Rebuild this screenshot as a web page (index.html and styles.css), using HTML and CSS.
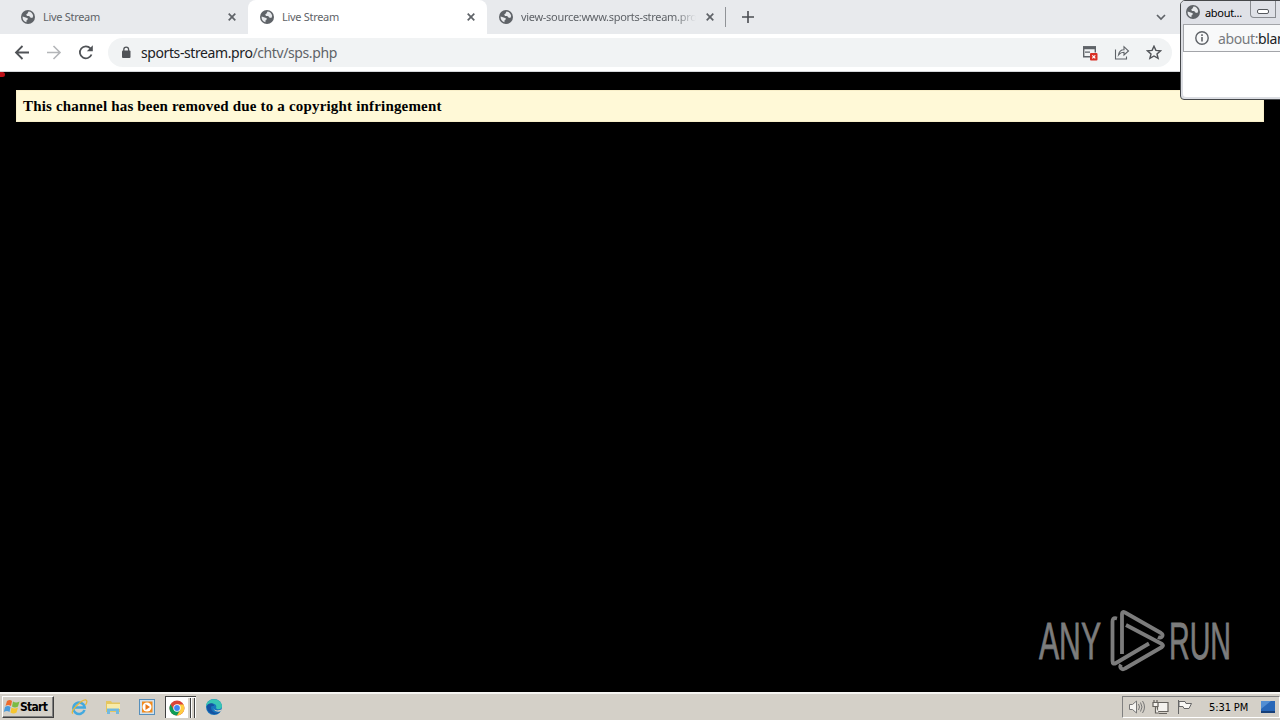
FILE: index.html
```
<!DOCTYPE html>
<html>
	<head>
		<meta charset="utf-8">
		<title>Live Stream</title>
		<link rel="stylesheet" href="styles.css">
	</head>
	<body>
		<svg class="defs">
			<symbol id="globe" viewBox="0 0 14 14">
				<circle cx="7" cy="7" r="7" fill="#5f6368"/>
				<path d="M1.6 6.4L4.6 7.5 6.8 8.2 6.4 10 5.4 10.6 5.5 12.3C2.8 11.6 1.3 9 1.6 6.4zM7.5 1.6L6.5 3.6 5.2 4.5 6 6 8.2 5.9 9.3 7.6 11.3 7.9 12.2 6.1C11.8 3.3 9.8 1.7 7.5 1.6z" fill="#e8eaed"/>
			</symbol>
			<symbol id="close" viewBox="0 0 8 8">
				<path d="M.7.7l6.6 6.6M7.3.7L.7 7.3" stroke="#5f6368" stroke-width="1.7"/>
			</symbol>
		</svg>
		<div id="screen">
			<div id="tabs">
				<div class="tab first">
					<svg class="globe"><use href="#globe"/></svg>
					<span class="title">Live Stream</span>
					<svg class="close"><use href="#close"/></svg>
				</div>
				<div class="tab current">
					<svg class="globe"><use href="#globe"/></svg>
					<span class="title">Live Stream</span>
					<svg class="close"><use href="#close"/></svg>
				</div>
				<div class="tab last">
					<svg class="globe"><use href="#globe"/></svg>
					<span class="title long">view-source:www.sports-stream.pro</span>
					<svg class="close"><use href="#close"/></svg>
				</div>
				<svg class="plus" viewBox="0 0 12 12"><path d="M6 0v12M0 6h12" stroke="#4a4d51" stroke-width="1.6"/></svg>
				<svg class="down" viewBox="0 0 10 7"><path d="M1 1l4 4 4-4" fill="none" stroke="#5f6368" stroke-width="1.7"/></svg>
			</div>
			<div id="toolbar">
				<svg class="nav" viewBox="0 0 16 16"><path d="M15 7.500H2M8.500 1L2 7.500l6.500 6.500" fill="none" stroke="#505357" stroke-width="1.800"/></svg>
				<svg class="nav" viewBox="0 0 16 16"><path d="M1 7.500h13M7.500 1L14 7.500l-6.500 6.500" fill="none" stroke="#b4b6b9" stroke-width="1.600"/></svg>
				<svg class="nav" viewBox="0 0 16 16"><path d="M13.500 9.500A6 6 0 1 1 12.400 3.400" fill="none" stroke="#505357" stroke-width="1.800"/><path d="M14.800.3v6H8.800z" fill="#505357"/></svg>
				<div id="address">
					<svg class="lock" viewBox="0 0 10 13"><rect x="1" y="4.500" width="8.500" height="7.500" rx="1" fill="#505357"/><path d="M2.800 5V3.500a2.400 2.400 0 0 1 4.800 0V5" fill="none" stroke="#505357" stroke-width="1.300"/></svg>
					<span class="url"><b>sports-stream.pro</b>/chtv/sps.php</span>
					<svg class="blocked" viewBox="0 0 16 16">
						<path d="M8 11.800H1.700V2h11.600V7.500" fill="none" stroke="#5f6368" stroke-width="1.400"/>
						<path d="M1 1.300h13v3H1zM3 6.500h5v1.200H3z" fill="#5f6368"/>
						<rect x="8" y="8" width="7.500" height="7.500" rx="1" fill="#d93025"/>
						<path d="M10.300 10.300l3 3M13.300 10.300l-3 3" stroke="#fff" stroke-width="1.200"/>
					</svg>
					<svg class="share" viewBox="0 0 16 16"><path d="M1.500 4.500V14h11v-2.500M4.500 10C5 6.500 7 4.700 10 4.700V1.700L14.500 6 10 10V7.300C7.500 7.300 6 8.100 4.500 10z" fill="none" stroke="#5f6368" stroke-width="1.100"/></svg>
					<svg class="star" viewBox="0 0 16 16"><path d="M8 1.200l1.900 4.200 4.600.4-3.500 3.100 1.100 4.500L8 11l-4.100 2.400L5 8.900 1.500 5.800l4.600-.4z" fill="none" stroke="#505357" stroke-width="1.400"/></svg>
				</div>
			</div>
			<div id="page">
				<div class="message">This channel has been removed due to a copyright infringement</div>
				<span class="dot"></span>
				<svg class="watermark" viewBox="0 0 210 70">
					<g class="mark">
						<text x="4" y="52.500" textLength="62" lengthAdjust="spacingAndGlyphs">ANY</text>
						<text x="134" y="52.500" textLength="62" lengthAdjust="spacingAndGlyphs">RUN</text>
						<path d="M87 48V8q0-3 3-1.500L126 27c3 2 1 6-3 4"/>
						<path d="M82 12.500c-4-1-4.500 1-4.500 3V55q0 4 3.500 2L114 37.500"/>
						<path d="M91 19l36 19q2 1.500 0 3L90 62.500c-3 2-6-1-4-4"/>
					</g>
				</svg>
			</div>
			<div id="taskbar">
				<div class="start">
					<svg viewBox="0 0 17 16"><path d="M4 2q3-2 5 0L8 7Q5 5 2.500 7z" fill="#ed6b2b"/><path d="M10 2.500q3 2 6.500 0L15 7.500q-3 2-6 0z" fill="#7abb43"/><path d="M2 8q3-2 5.500 0L6.500 13Q4 11 .8 13z" fill="#4a9bdb"/><path d="M8.500 8.500q3 2 6.500 0l-1.500 5q-3 2-6 0z" fill="#f6c52f"/></svg>
					<b>Start</b>
				</div>
				<svg class="app ie" viewBox="0 0 18 18"><path d="M14.500 12A5.700 5.700 0 1 1 14.700 9.500H5" fill="none" stroke="#43a9df" stroke-width="2.500"/><path d="M3 15.500C-1 14 12 1 16 2q2 1-.5 5" fill="none" stroke="#e6b83b" stroke-width="1.300"/></svg>
				<svg class="app" viewBox="0 0 18 18"><path d="M2 3h5l1 1.500h8V14H2z" fill="#e5c65f"/><path d="M3 6h13v5H3z" fill="#f8eba8"/><path d="M3 16v-5.500h12V16h-3v-3H6v3z" fill="#72b9df"/></svg>
				<svg class="app" viewBox="0 0 18 18"><rect x="1.500" y="1.500" width="15" height="15" fill="#cfe1ee" stroke="#568fbb"/><rect x="4" y="3.500" width="10.500" height="11" fill="#f28b1d"/><circle cx="9" cy="9" r="4.500" fill="#fff"/><path d="M7.500 6l4.500 3-4.500 3z" fill="#e9781a"/></svg>
				<div class="running">
					<svg viewBox="0 0 16 16"><circle cx="8" cy="8" r="7.500" fill="#db4437"/><path d="M1.500 4.250A7.500 7.500 0 0 0 8 15.500l3.300-5.700H4.700z" fill="#0f9d58"/><path d="M8 15.500A7.500 7.500 0 0 0 14.500 4.500H8l3.300 5.500z" fill="#ffcd40"/><circle cx="8" cy="8" r="3.700" fill="#fff"/><circle cx="8" cy="8" r="2.900" fill="#4285f4"/></svg>
					<i></i><i></i>
				</div>
				<svg class="app edge" viewBox="0 0 18 18"><circle cx="9" cy="9" r="8" fill="#1676bd"/><path d="M1 8C2-1 16-1 17 8c0 4-5 4-6 2 2-5-6-6-10-2z" fill="#38c5b4"/><path d="M6 9c0 5 5 7 9 5-5 5-14 1-13-6 1-3 7-4 7 0-2 0-3 0-3 1z" fill="#1552a1"/><path d="M9 8c-2 4 3 6 8 3l-1 2c-4 2-9-1-7-5z" fill="#d4d0c8"/></svg>
				<div class="tray">
					<svg viewBox="0 0 18 16" fill="#f6f5f2" stroke="#777" stroke-width="1"><path d="M1.500 5.500h3L8.500 2v12l-4-3.500h-3z"/><path d="M10.500 5q2 3 0 6M12.500 3.500q3 4.500 0 9M14.500 2q4 6 0 12" fill="none"/></svg>
					<svg viewBox="0 0 18 16" fill="#f4f2ee" stroke="#66635e" stroke-width="1.200"><path d="M5.500 3.500h10.500v9H5.500zM7 14.500h8"/><path d="M2 1v3M5 1v3M1 3.500h5v4H1zM3.500 7.500V14H7" /></svg>
					<svg viewBox="0 0 18 16" fill="#f8f7f4" stroke="#666"><path d="M2.500 1v14M3 2.500h6l1 2h5.500L13 9.500H8l-1-2H3z"/></svg>
					<span class="time">5:31 PM</span>
					<svg class="desk" viewBox="0 0 16 16"><path d="M1 2h14v10H1z" fill="#2867b8"/><path d="M1 2h10L1 10z" fill="#528ed3"/><path d="M1 12h14v2H1z" fill="#173f78"/></svg>
				</div>
			</div>
			<!-- popup over the browser corner -->
			<div id="popup">
				<div class="caption">
					<svg class="globe"><use href="#globe"/></svg>
					<span>about...</span>
					<div class="buttons"><i></i></div>
				</div>
				<div class="location">
					<svg viewBox="0 0 14 14"><circle cx="7" cy="7" r="6.200" fill="none" stroke="#5f6368" stroke-width="1.400"/><path d="M7 6v4.500M7 3.300v1.600" stroke="#5f6368" stroke-width="1.600"/></svg>
					<span>about:<b>blank</b></span>
				</div>
			</div>
		</div>
	</body>
</html>
```
FILE: styles.css
```
*{
	padding: 0;
	margin: 0;
	box-sizing: border-box;
}
body{
	font-family: "Noto Sans", sans-serif;
	background-color: #000000;
	overflow: hidden;
}
svg{
	display: block;
	flex: none;
}
.defs{
	display: none;
}
#screen{
	width: 1280px;
	height: 720px;
	position: relative;
	display: flex;
	flex-direction: column;
	overflow: hidden;
}
#tabs{
	height: 34px;
	background-color: #e8eaed;
	display: flex;
	align-items: center;
	padding-right: 114px;
}
.tab{
	height: 34px;
	display: flex;
	align-items: center;
	width: 239px;
	padding: 0 12px;
	color: #5f6368;
}
.first{
	width: 248px;
	padding-left: 21px;
}
.current{
	background-color: #ffffff;
	border-radius: 8px 8px 0 0;
}
.last{
	padding-right: 10px;
	height: 20px;
	border-right: 1px solid #909397;
}
.globe{
	width: 14px;
	height: 14px;
}
.title{
	flex: 1;
	margin-left: 8px;
	font-size: 11px;
	line-height: 16px;
	letter-spacing: -0.3px;
	white-space: nowrap;
	overflow: hidden;
}
.long{
	flex: none;
	width: 175px;
	margin-right: 10px;
	letter-spacing: -0.3px;
	-webkit-mask-image: linear-gradient(to right, #000 88%, transparent);
	mask-image: linear-gradient(to right, #000 88%, transparent);
}
.close{
	width: 8px;
	height: 8px;
}
.plus{
	width: 12px;
	height: 12px;
	margin-left: 16px;
}
.down{
	width: 10px;
	height: 7px;
	margin-left: auto;
}
#toolbar{
	height: 38px;
	background-color: #ffffff;
	border-bottom: 1px solid #d5d7da;
	display: flex;
	align-items: center;
	gap: 16px;
	padding-left: 14px;
}
.nav{
	width: 16px;
	height: 16px;
}
#address{
	width: 1064px;
	height: 29px;
	margin-left: -2px;
	border-radius: 15px;
	background-color: #f1f3f4;
	display: flex;
	align-items: center;
	padding: 0 10px 0 13px;
}
.lock{
	width: 10px;
	height: 13px;
}
.url{
	flex: 1;
	margin-left: 10px;
	font-size: 14px;
	line-height: 20px;
	letter-spacing: -0.4px;
	color: #5f6368;
}
.url b{
	font-weight: normal;
	color: #202124;
}
.blocked, .share, .star{
	width: 16px;
	height: 16px;
	margin-left: 16px;
}
#page{
	height: 620px;
	background-color: #000000;
	padding: 18px 16px;
	position: relative;
}
.message{
	height: 32px;
	padding-left: 6px;
	border: 1px solid #f8efc9;
	background-color: #fff9d7;
	color: #000000;
	font: bold 15px/30px "Liberation Serif", serif;
	letter-spacing: 0.18px;
}
.dot{
	position: absolute;
	left: 0;
	top: 0;
	width: 5px;
	height: 5px;
	border-radius: 0 3px 3px 0;
	background-color: #bd1018;
}
.watermark{
	position: absolute;
	left: 1035px;
	top: 534px;
	width: 210px;
	height: 70px;
}
.mark text{
	font: 51px "Liberation Sans", sans-serif;
	fill: #7c7c7c;
	stroke: #7c7c7c;
	stroke-width: 0.8px;
}
.mark path{
	fill: none;
	stroke: #7c7c7c;
	stroke-width: 3.8;
	stroke-linejoin: round;
}
#taskbar{
	height: 28px;
	background-color: #d4d0c8;
	border-top: 2px solid #f5f4f1;
	display: flex;
	align-items: center;
	padding: 0 0 0 2px;
}
.start{
	width: 52px;
	height: 22px;
	border: 1px solid #ffffff;
	border-right-color: #404040;
	border-bottom-color: #404040;
	box-shadow: inset -1px -1px #808080;
	display: flex;
	align-items: center;
	font: 12px "DejaVu Sans Condensed", "DejaVu Sans", sans-serif;
	color: #000000;
}
.start svg{
	width: 17px;
	height: 16px;
}
.start b{
	letter-spacing: -0.7px;
}
.app{
	width: 18px;
	height: 18px;
	margin-left: 16px;
}
.ie{
	margin-left: 16px;
}
.running{
	width: 31px;
	height: 22px;
	margin-left: 9px;
	padding-left: 3px;
	background-color: #ffffff;
	border-left: 1px solid #404040;
	border-top: 1px solid #404040;
	display: flex;
	align-items: center;
}
.running svg{
	width: 16px;
	height: 16px;
	margin-right: 2px;
}
.running i{
	width: 3px;
	height: 20px;
	margin-left: 1px;
	background-color: #d4d0c8;
	border-right: 1px solid #404040;
}
.edge{
	margin-left: 9px;
}
.tray{
	width: 158px;
	height: 22px;
	margin-left: auto;
	border: 1px solid #808080;
	border-right-color: #ffffff;
	border-bottom-color: #ffffff;
	display: flex;
	align-items: center;
	gap: 6px;
	padding-left: 5px;
}
.tray svg{
	width: 18px;
	height: 16px;
}
.time{
	width: 43px;
	margin-left: 9px;
	font: 11px "DejaVu Sans Condensed", sans-serif;
	letter-spacing: -0.1px;
	white-space: nowrap;
	color: #000000;
}
.tray .desk{
	width: 16px;
	margin-left: 2px;
}
#popup{
	position: absolute;
	left: 1180px;
	top: 0;
	width: 110px;
	height: 100px;
	background-color: #ffffff;
	border: 1px solid #45474a;
	border-radius: 5px 0 0 4px;
	box-shadow: inset 2px -2px #dcdee3;
}
.caption{
	height: 23px;
	background-color: #dfe1e7;
	border-radius: 4px 0 0 0;
	display: flex;
	align-items: center;
	padding-left: 5px;
	padding-bottom: 1px;
	font-size: 11px;
	color: #000000;
}
.caption span{
	width: 46px;
	margin-left: 5px;
	letter-spacing: -0.3px;
}
.buttons{
	align-self: flex-start;
	width: 26px;
	height: 17px;
	margin-left: -1px;
	border: 1px solid #888b90;
	border-top: 0;
	border-radius: 0 0 0 4px;
	padding: 8px 0 0 6px;
}
.buttons i{
	display: block;
	width: 12px;
	height: 5px;
	border: 1px solid #55585d;
	border-radius: 2px;
	background-color: #ffffff;
}
.location{
	height: 28px;
	margin-left: 2px;
	border: 1px solid #a3a5a9;
	background-color: #f8f9fa;
	display: flex;
	align-items: center;
	padding-left: 11px;
	font-size: 14px;
	color: #777a7e;
}
.location svg{
	width: 14px;
	height: 14px;
}
.location span{
	margin-left: 9px;
	letter-spacing: -0.4px;
	white-space: nowrap;
}
.location b{
	font-weight: normal;
	color: #202124;
}
```
